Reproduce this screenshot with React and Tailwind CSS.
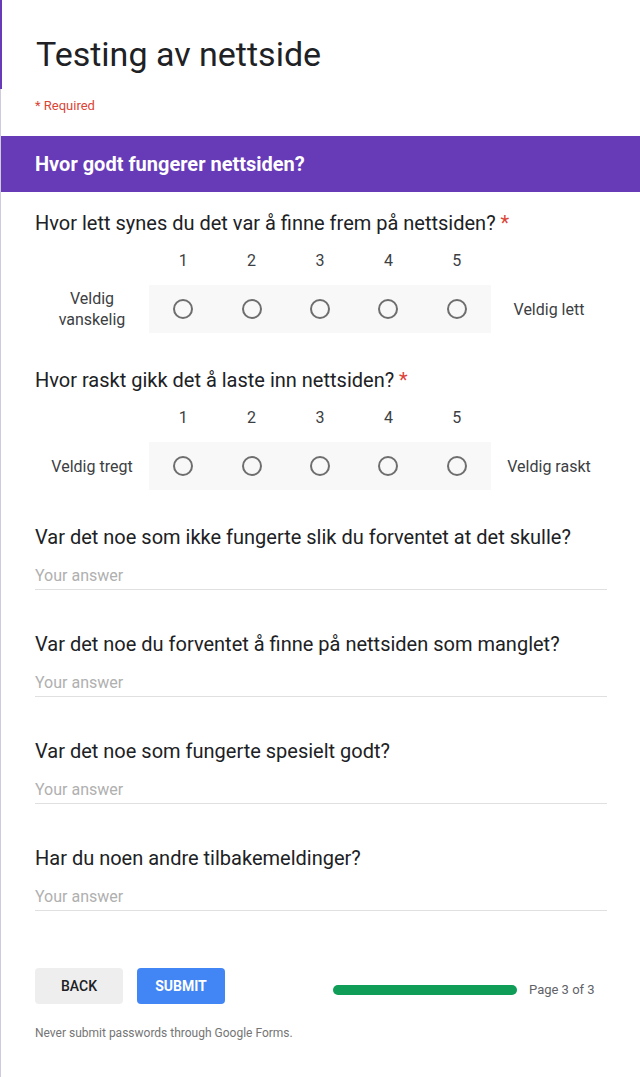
const scales = [
    { title: 'Hvor lett synes du det var å finne frem på nettsiden?', low: ['Veldig', 'vanskelig'], high: 'Veldig lett' },
    { title: 'Hvor raskt gikk det å laste inn nettsiden?', low: ['Veldig tregt'], high: 'Veldig raskt' },
]

const openQuestions = [
    'Var det noe som ikke fungerte slik du forventet at det skulle?',
    'Var det noe du forventet å finne på nettsiden som manglet?',
    'Var det noe som fungerte spesielt godt?',
    'Har du noen andre tilbakemeldinger?',
]

function Radio() {
    return <span className="block w-5 h-5 rounded-full border-2 border-[#6e6e6e]" />
}

function ScaleQuestion({ q, first }) {
    return (
        <div className={first ? 'pt-[19px]' : 'pt-[35px]'}>
            <h3 className="text-[20px] leading-6 text-[#202124]">
                {q.title} <span className="text-[#db4437]">*</span>
            </h3>
            <div className="grid grid-cols-[114px_repeat(5,1fr)_116px] mt-4 text-base leading-5 text-[#3c4043]">
                <div />
                {[1, 2, 3, 4, 5].map(n => <div key={n} className="text-center">{n}</div>)}
                <div />
            </div>
            <div className="grid grid-cols-[114px_repeat(5,1fr)_116px] mt-[14px] h-12 items-center text-base leading-[21px] text-[#3c4043]">
                <div className="text-center">
                    {q.low.map(l => <div key={l}>{l}</div>)}
                </div>
                {[1, 2, 3, 4, 5].map(n => (
                    <div key={n} className="h-12 bg-[#f8f8f8] flex items-center justify-center">
                        <Radio />
                    </div>
                ))}
                <div className="text-center">{q.high}</div>
            </div>
        </div>
    )
}

function OpenQuestion({ title, first }) {
    return (
        <div className={first ? 'pt-[35px]' : 'pt-[42px]'}>
            <h3 className="text-[20px] leading-6 text-[#202124]">{title}</h3>
            <div className="mt-[15px] h-[26px] border-b border-[#e0e0e0] text-base leading-6 text-[#b0b0b0]">Your answer</div>
        </div>
    )
}

export default function App() {
    return (
        <div className="min-h-[1077px] bg-white font-['Roboto',sans-serif] border-l border-[#cfcbdc]">
            <div className="h-[89px] -ml-px border-l-2 border-[#673ab7] pl-[34px] pt-[34px]">
                <h1 className="text-[34px] leading-10 text-[#202124]">Testing av nettside</h1>
            </div>
            <div className="h-[47px] pl-[34px] pt-[9px] text-[13px] leading-4 text-[#db4437]">* Required</div>
            <div className="h-14 bg-[#673ab7] flex items-center pl-[34px]">
                <h2 className="text-[20px] font-bold text-white">Hvor godt fungerer nettsiden?</h2>
            </div>
            <div className="pl-[34px] pr-[33px]">
                {scales.map((q, i) => <ScaleQuestion key={i} q={q} first={i === 0} />)}
                {openQuestions.map((t, i) => <OpenQuestion key={i} title={t} first={i === 0} />)}
                <div className="mt-[57px] flex items-center">
                    <button className="w-[88px] h-9 rounded-sm bg-[#eeeeee] text-sm font-medium text-[#202124]">BACK</button>
                    <button className="ml-[14px] w-[88px] h-9 rounded-sm bg-[#4285f4] text-sm font-bold text-white">SUBMIT</button>
                    <div className="ml-[108px] mt-2 w-[184px] h-[10px] rounded-full bg-[#0f9d58]" />
                    <span className="ml-3 mt-2 text-[13px] text-[#5f6368]">Page 3 of 3</span>
                </div>
                <p className="mt-[21px] text-xs leading-4 text-[#757575]">Never submit passwords through Google Forms.</p>
            </div>
        </div>
    )
}
